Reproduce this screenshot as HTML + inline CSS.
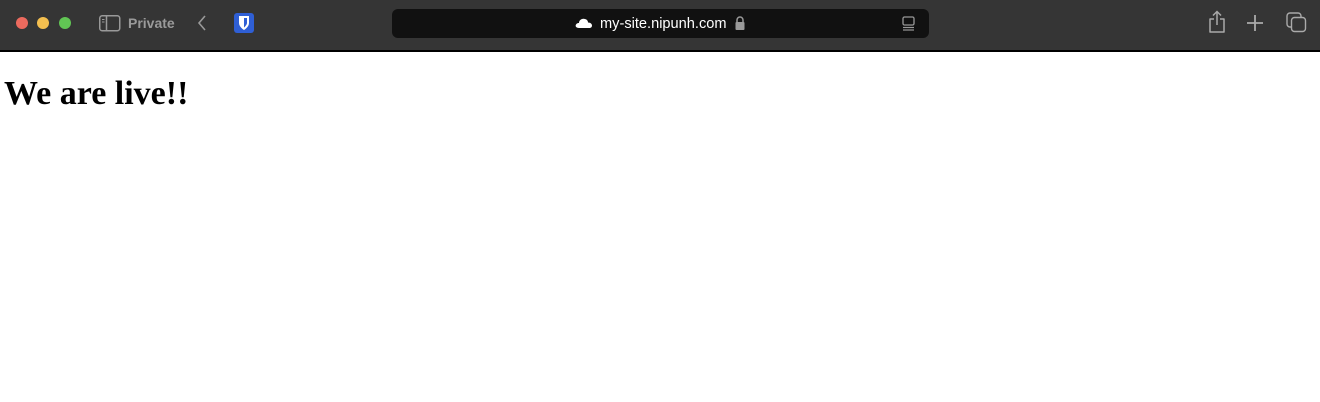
<!DOCTYPE html>
<html><head><meta charset="utf-8"><style>
*{margin:0;padding:0;box-sizing:border-box}
body{width:1320px;height:402px;background:#fff;position:relative;overflow:hidden;font-family:"Liberation Sans",sans-serif}
.bar{position:absolute;left:0;top:0;width:1320px;height:52px;background:#353535;border-bottom:2px solid #000}
.dot{position:absolute;top:17px;width:12px;height:12px;border-radius:50%}
.url{position:absolute;left:392px;top:9px;width:537px;height:29px;background:#111;border-radius:6px}
h1{position:absolute;left:4px;top:75px;font:bold 34px "Liberation Serif",serif;color:#000;white-space:nowrap}
</style></head><body>
<div class="bar">
<div class="dot" style="left:16px;background:#ec6a5e"></div>
<div class="dot" style="left:37px;background:#f4bf4f"></div>
<div class="dot" style="left:59px;background:#61c554"></div>
<svg style="position:absolute;left:99px;top:15px" width="22" height="17"><rect x="0.75" y="0.75" width="20" height="15" rx="2.5" fill="none" stroke="#999" stroke-width="1.5"/><line x1="7.5" y1="1" x2="7.5" y2="16" stroke="#999" stroke-width="1.5"/><line x1="3" y1="4.5" x2="5.5" y2="4.5" stroke="#999"/><line x1="3" y1="7" x2="5.5" y2="7" stroke="#999"/></svg>
<div style="position:absolute;left:128px;top:15px;font-size:14px;font-weight:bold;color:#9a9a9a">Private</div>
<svg style="position:absolute;left:196px;top:14px" width="12" height="18"><path d="M9 2 L3 9 L9 16" fill="none" stroke="#999" stroke-width="1.6"/></svg>
<div style="position:absolute;left:234px;top:13px;width:20px;height:20px;background:#2f5fd5;border-radius:3px"></div>
<svg style="position:absolute;left:238px;top:15px" width="12" height="16"><path d="M1 1 H11 V8 C11 12 6 15 6 15 C6 15 1 12 1 8 Z" fill="#fff"/><path d="M6 3 H9 V8 C9 10 6 12.5 6 12.5 Z" fill="#2f5fd5"/></svg>
<div class="url"></div>
<svg style="position:absolute;left:575px;top:17px" width="18" height="12"><path d="M4 11 C1 11 0 9 1 7.5 C2 6 3 6 4 6 C4 3 7 1 10 2 C12 2.5 13 4 13 5.5 C15.5 5.5 17 7 17 8.5 C17 10 16 11 14 11 Z" fill="#fff"/></svg>
<div style="position:absolute;left:600px;top:16px;font-size:14.6px;color:#fff">my-site.nipunh.com</div>
<svg style="position:absolute;left:734px;top:15px" width="12" height="16"><path d="M3 7 V5 A3 3 0 0 1 9 5 V7" fill="none" stroke="#999" stroke-width="1.5"/><rect x="1.5" y="7" width="9" height="8" rx="1" fill="#999"/></svg>
<svg style="position:absolute;left:902px;top:16px" width="14" height="16"><rect x="1" y="1" width="11" height="8" rx="1.5" fill="none" stroke="#999" stroke-width="1.3"/><line x1="1" y1="11.5" x2="12" y2="11.5" stroke="#999" stroke-width="1.2"/><line x1="1" y1="14" x2="12" y2="14" stroke="#999" stroke-width="1.2"/></svg>
<svg style="position:absolute;left:1207px;top:10px" width="20" height="24"><path d="M7 9 H3 V22 H17 V9 H13" fill="none" stroke="#aaa" stroke-width="1.5" stroke-linejoin="round"/><path d="M10 15 V2 M6 5.5 L10 1.5 L14 5.5" fill="none" stroke="#aaa" stroke-width="1.5"/></svg>
<svg style="position:absolute;left:1246px;top:14px" width="18" height="18"><path d="M9 1 V17 M1 9 H17" stroke="#aaa" stroke-width="1.8"/></svg>
<svg style="position:absolute;left:1286px;top:12px" width="22" height="22"><rect x="1" y="1" width="14" height="14" rx="3" fill="none" stroke="#aaa" stroke-width="1.4"/><rect x="5.5" y="5.5" width="14" height="14" rx="3" fill="#353535" stroke="#aaa" stroke-width="1.4"/></svg>
</div>
<h1>We are live!!</h1>
</body></html>
